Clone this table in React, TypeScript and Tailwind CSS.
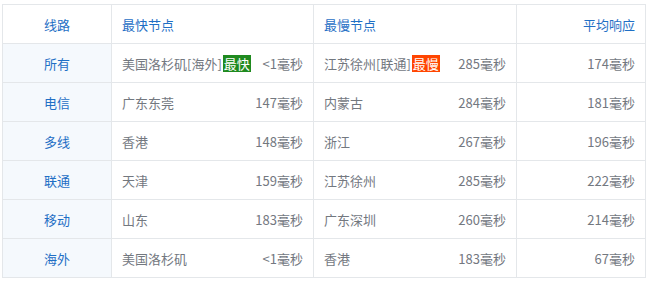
import React from "react";

type Row = {
  line: string;
  fast: string;
  fastMs: string;
  slow: string;
  slowMs: string;
  avg: string;
  fastTag?: string;
  slowTag?: string;
};

const rows: Row[] = [
  { line: "所有", fast: "美国洛杉矶[海外]", fastTag: "最快", fastMs: "<1毫秒", slow: "江苏徐州[联通]", slowTag: "最慢", slowMs: "285毫秒", avg: "174毫秒" },
  { line: "电信", fast: "广东东莞", fastMs: "147毫秒", slow: "内蒙古", slowMs: "284毫秒", avg: "181毫秒" },
  { line: "多线", fast: "香港", fastMs: "148毫秒", slow: "浙江", slowMs: "267毫秒", avg: "196毫秒" },
  { line: "联通", fast: "天津", fastMs: "159毫秒", slow: "江苏徐州", slowMs: "285毫秒", avg: "222毫秒" },
  { line: "移动", fast: "山东", fastMs: "183毫秒", slow: "广东深圳", slowMs: "260毫秒", avg: "214毫秒" },
  { line: "海外", fast: "美国洛杉矶", fastMs: "<1毫秒", slow: "香港", slowMs: "183毫秒", avg: "67毫秒" },
];

const font = { fontFamily: '"Microsoft YaHei", "Noto Sans CJK SC", sans-serif' };

export default function App() {
  return (
    <div className="h-[282px] w-[648px] bg-white pl-[2px] pt-[4px]" style={font}>
      <table className="w-[643px] table-fixed border-collapse text-[13px] leading-none">
        <colgroup>
          <col className="w-[109px]" />
          <col className="w-[202px]" />
          <col className="w-[203px]" />
          <col className="w-[129px]" />
        </colgroup>
        <thead>
          <tr className="h-[39px] text-[#1f6fc5]">
            <th className="border border-[#e4e7ea] text-center font-normal">线路</th>
            <th className="border border-[#e4e7ea] px-[10px] text-left font-normal">最快节点</th>
            <th className="border border-[#e4e7ea] px-[10px] text-left font-normal">最慢节点</th>
            <th className="border border-[#e4e7ea] px-[10px] text-right font-normal">平均响应</th>
          </tr>
        </thead>
        <tbody className="text-[#73787f]">
          {rows.map((r) => (
            <tr key={r.line} className="h-[39px]">
              <td className="border border-[#e4e7ea] bg-[#f5f9fd] text-center text-[#1f6fc5]">{r.line}</td>
              <td className="border border-[#e4e7ea] px-[10px]">
                <div className="flex items-center justify-between">
                  <span className="flex items-center">
                    {r.fast}
                    {r.fastTag && (
                      <span className="ml-[1px] bg-[#1f8a1f] px-[1px] py-[2px] text-white">{r.fastTag}</span>
                    )}
                  </span>
                  <span>{r.fastMs}</span>
                </div>
              </td>
              <td className="border border-[#e4e7ea] px-[10px]">
                <div className="flex items-center justify-between">
                  <span className="flex items-center">
                    {r.slow}
                    {r.slowTag && (
                      <span className="ml-[1px] bg-[#ff4500] px-[1px] py-[2px] text-white">{r.slowTag}</span>
                    )}
                  </span>
                  <span>{r.slowMs}</span>
                </div>
              </td>
              <td className="border border-[#e4e7ea] px-[10px] text-right">{r.avg}</td>
            </tr>
          ))}
        </tbody>
      </table>
    </div>
  );
}
